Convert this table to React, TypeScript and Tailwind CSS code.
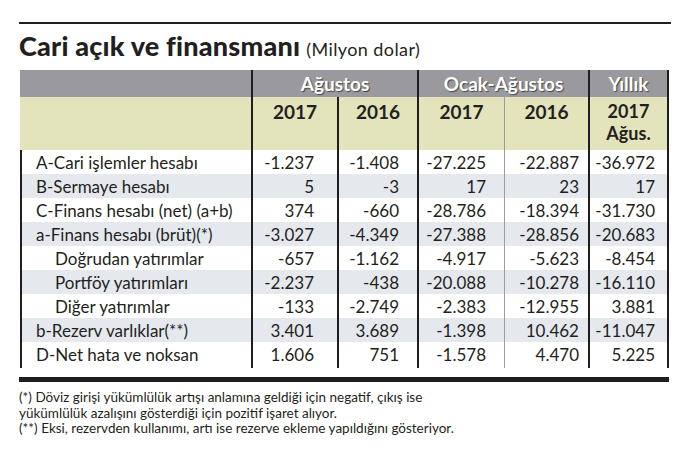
const rows = [
  { label: 'A-Cari işlemler hesabı', v: ['-1.237', '-1.408', '-27.225', '-22.887', '-36.972'] },
  { label: 'B-Sermaye hesabı', v: ['5', '-3', '17', '23', '17'], striped: true },
  { label: 'C-Finans hesabı (net) (a+b)', v: ['374', '-660', '-28.786', '-18.394', '-31.730'] },
  { label: 'a-Finans hesabı (brüt)(*)', v: ['-3.027', '-4.349', '-27.388', '-28.856', '-20.683'], striped: true },
  { label: 'Doğrudan yatırımlar', v: ['-657', '-1.162', '-4.917', '-5.623', '-8.454'], indent: true },
  { label: 'Portföy yatırımları', v: ['-2.237', '-438', '-20.088', '-10.278', '-16.110'], indent: true, striped: true },
  { label: 'Diğer yatırımlar', v: ['-133', '-2.749', '-2.383', '-12.955', '3.881'], indent: true },
  { label: 'b-Rezerv varlıklar(**)', v: ['3.401', '3.689', '-1.398', '10.462', '-11.047'], striped: true },
  { label: 'D-Net hata ve noksan', v: ['1.606', '751', '-1.578', '4.470', '5.225'] },
];

// each value column: left border style + right padding
const cellCls = [
  'border-l-2 border-[#1e1e1e] pr-[23px]',
  'border-l-2 border-[#1e1e1e] pr-[18px]',
  'border-l-2 border-[#1e1e1e] pr-[18px]',
  'border-l border-[#9c9c9c] pr-[9px]',
  'border-l-2 border-r-2 border-[#1e1e1e] pr-[12px]',
];

const App = () => {
  return (
    <div className="w-[677px] h-[456px] bg-white pt-[22px] pl-[19px] text-[#231f20] font-['Lato',sans-serif]">
      {/* Top rule + title */}
      <div className="w-[652px] border-t-2 border-[#1e1e1e]" />
      <h1 className="mt-[6px] h-[40px] flex items-baseline gap-[6px] whitespace-nowrap">
        <span className="text-[27px] font-black tracking-[0.2px] leading-[32px]">Cari açık ve finansmanı</span>
        <span className="text-[18px] font-normal tracking-[0.4px]">(Milyon dolar)</span>
      </h1>

      {/* Table */}
      <div className="ml-px w-[649px]">
        {/* Gray group header */}
        <div className="grid grid-cols-[231px_166px_171px_81px] h-[27px] bg-[#9a9a9e] text-white font-bold text-[19px] [text-shadow:1px_1px_1px_rgba(0,0,0,0.55)]">
          <div />
          <div className="border-l-2 border-[#1e1e1e] flex items-center justify-center">Ağustos</div>
          <div className="border-l-2 border-[#1e1e1e] flex items-center justify-center">Ocak-Ağustos</div>
          <div className="border-l-2 border-r-2 border-[#1e1e1e] flex items-center justify-center">Yıllık</div>
        </div>

        {/* Years */}
        <div className="grid grid-cols-[231px_86px_80px_87px_84px_81px] h-[53px] bg-[#e3e4bb] font-bold text-[19px] leading-[19px]">
          <div />
          <div className="border-l-2 border-[#1e1e1e] pt-[5px] text-center">2017</div>
          <div className="border-l-2 border-[#1e1e1e] pt-[5px] text-center">2016</div>
          <div className="border-l-2 border-[#1e1e1e] pt-[5px] text-center">2017</div>
          <div className="border-l border-[#9c9c9c] pt-[5px] text-center">2016</div>
          <div className="border-l-2 border-r-2 border-[#1e1e1e] pt-[3px] text-center text-[18px] leading-[22px]">
            2017
            <br />
            Ağus.
          </div>
        </div>

        {/* Body */}
        {rows.map((r) => (
          <div
            key={r.label}
            className={`grid grid-cols-[231px_86px_80px_87px_84px_81px] h-[24px] text-[17px] ${r.striped ? 'bg-[#e5e9ee]' : 'bg-white'}`}
          >
            <div className={`border-l-2 border-[#1e1e1e] flex items-center whitespace-nowrap ${r.indent ? 'pl-[33px]' : 'pl-[14px]'}`}>
              {r.label}
            </div>
            {r.v.map((val, i) => (
              <div key={i} className={`${cellCls[i]} flex items-center justify-end`}>
                {val}
              </div>
            ))}
          </div>
        ))}
      </div>

      {/* Bottom bar */}
      <div className="mt-[11px] w-[650px] h-[5px] bg-[#1e1e1e]" />

      {/* Footnotes */}
      <div className="mt-[8px] text-[13.5px] leading-[15.5px] whitespace-nowrap">
        <p>(*) Döviz girişi yükümlülük artışı anlamına geldiği için negatif, çıkış ise</p>
        <p>yükümlülük azalışını gösterdiği için pozitif işaret alıyor.</p>
        <p>(**) Eksi, rezervden kullanımı, artı ise rezerve ekleme yapıldığını gösteriyor.</p>
      </div>
    </div>
  );
};

export default App;
